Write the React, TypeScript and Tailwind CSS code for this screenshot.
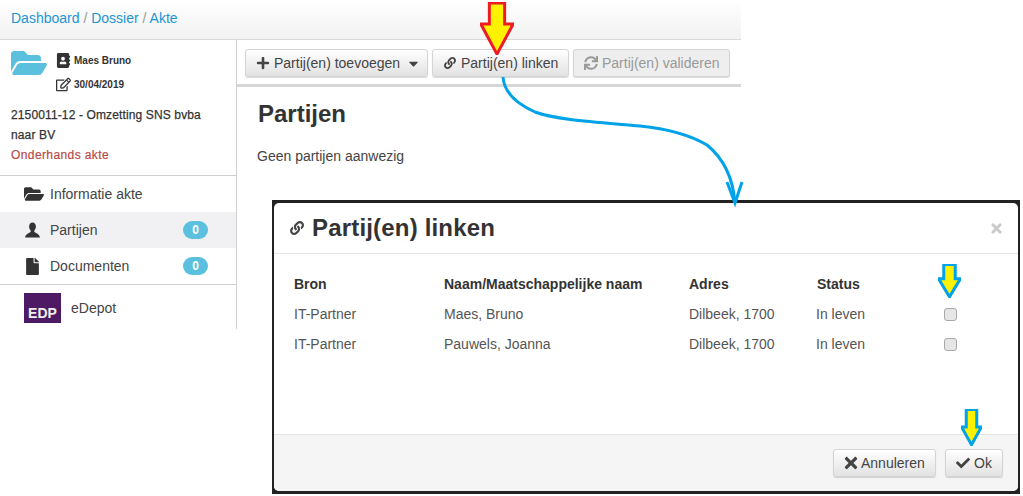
import { FaFolderOpen, FaFile, FaLink, FaPlus, FaTimes, FaCheck, FaSync, FaRegEdit, FaAddressBook, FaCaretDown } from "react-icons/fa";

const F = "font-['Liberation_Sans',Arial,sans-serif]";
const btn = "flex items-center rounded-[3px] border border-[#d4d4d4] bg-gradient-to-b from-[#ffffff] to-[#e2e2e2] shadow-[0_1px_1px_rgba(0,0,0,0.15)] text-[14px] text-[#444]";

function Arrow({ cls, pts, fill, stroke, sw }: { cls: string; pts: string; fill: string; stroke: string; sw: number }) {
  return (
    <svg className={cls} viewBox="0 0 40 60" preserveAspectRatio="none">
      <polygon points={pts} fill={fill} stroke={stroke} strokeWidth={sw} vectorEffect="non-scaling-stroke" />
    </svg>
  );
}

function UserIcon() {
  return (
    <svg width="17" height="17" viewBox="0 0 16 16" fill="currentColor">
      <path d="M8 .5c-2 0-3.2 1.6-3.2 3.8 0 1.5.6 2.8 1.4 3.6.3.4.3 1-.1 1.4C5 10.3 1.5 11 1 14.5h14c-.5-3.5-4-4.2-5.1-5.2-.4-.4-.4-1-.1-1.4.8-.8 1.4-2.1 1.4-3.6C11.2 2.1 10 .5 8 .5z" />
    </svg>
  );
}

function NavItem({ icon, label, badge, active }: { icon: React.ReactNode; label: string; badge?: boolean; active?: boolean }) {
  return (
    <div className={`flex items-center h-[36px] pl-[24px] pr-[28px] text-[14px] text-[#444] ${active ? "bg-[#f1f1f4]" : ""}`}>
      <span className="w-[26px] flex justify-start text-[#333]">{icon}</span>
      <span className="flex-1">{label}</span>
      {badge && <span className="w-[25px] h-[18px] rounded-[9px] bg-[#5bc0de] text-white text-[12px] font-bold flex items-center justify-center">0</span>}
    </div>
  );
}

function Row({ name }: { name: string }) {
  return (
    <div className="flex items-center h-[30px] text-[14px] text-[#555]">
      <span className="w-[150px]">IT-Partner</span>
      <span className="w-[245px]">{name}</span>
      <span className="w-[127px]">Dilbeek, 1700</span>
      <span className="w-[128px]">In leven</span>
      <span className="w-[13px] h-[13px] rounded-[3px] border border-[#a9a9a9] bg-[#e6e6e6]" />
    </div>
  );
}

export default function App() {
  return (
    <div className={`${F} relative w-[1023px] h-[496px] overflow-hidden bg-white`}>
      <div className="w-[741px]">
        <div className="h-[40px] border-b border-[#d8d8d8] bg-gradient-to-b from-[#ffffff] to-[#f2f2f2] pl-[11px] pt-[9px] text-[14px] leading-[18px] text-[#999]">
          <span className="text-[#2196d3]">Dashboard</span> / <span className="text-[#2196d3]">Dossier</span> / <span className="text-[#2196d3]">Akte</span>
        </div>
        <div className="flex">
          <aside className="w-[237px] h-[289px] shrink-0 border-r border-[#d0d0d0]">
            <div className="h-[136px] border-b border-[#cfcfcf] pl-[11px]">
              <div className="flex">
                <FaFolderOpen className="mt-[5px] text-[#5bc0de]" size={36} />
                <div className="ml-[9px] mt-[11px] text-[10px] font-bold text-[#333]">
                  <div className="flex items-center h-[18px] gap-[3px]"><FaAddressBook size={15} className="w-[15px]" />Maes Bruno</div>
                  <div className="flex items-center h-[18px] mt-[6px] gap-[3px]"><FaRegEdit size={15} className="w-[15px]" />30/04/2019</div>
                </div>
              </div>
              <div className="mt-[12px] text-[12px] leading-[20px] tracking-[0.13px] [-webkit-text-stroke:0.25px_#333] text-[#333]">
                2150011-12 - Omzetting SNS bvba<br />naar BV
              </div>
              <div className="text-[12px] leading-[20px] tracking-[0.4px] [-webkit-text-stroke:0.2px_#b94a48] text-[#b94a48]">Onderhands akte</div>
            </div>
            <NavItem icon={<FaFolderOpen size={20} />} label="Informatie akte" />
            <NavItem active icon={<UserIcon />} label="Partijen" badge />
            <NavItem icon={<FaFile size={17} />} label="Documenten" badge />
            <div className="border-t border-[#cfcfcf] flex items-center pl-[24px] pt-[8px]">
              <div className="w-[37px] h-[30px] bg-[#4d1a63] text-[#eee] text-[14px] font-bold flex items-end justify-center leading-[19px]">EDP</div>
              <span className="ml-[10px] text-[14px] text-[#444]">eDepot</span>
            </div>
          </aside>
          <main className="flex-1">
            <div className="h-[47px] pl-[8px] pt-[9px] border-b-[3px] border-[#d6d6d6] flex gap-[4px]">
              <div className={`${btn} w-[183px] h-[28px] pl-[10px]`}>
                <FaPlus size={14} className="mr-[4px]" />Partij(en) toevoegen
                <FaCaretDown size={15} className="ml-[6px]" />
              </div>
              <div className={`${btn} w-[137px] h-[28px] pl-[11px]`}>
                <FaLink size={12} className="mr-[5px]" />Partij(en) linken
              </div>
              <div className={`${btn} w-[157px] h-[28px] pl-[10px] text-[#999] bg-none bg-[#eeeeee]`}>
                <FaSync size={14} className="mr-[4px]" />Partij(en) valideren
              </div>
            </div>
            <h1 className="mt-[12px] ml-[21px] text-[24px] leading-[30px] font-bold text-[#333]">Partijen</h1>
            <p className="mt-[17px] ml-[20px] text-[14px] leading-[20px] text-[#444]">Geen partijen aanwezig</p>
            <div className="mt-[32px] ml-[39px] flex text-[14px] leading-[16px] text-[#555]">
              <span className="w-[79px]">toevoegen</span><span className="w-[48px]">▾</span><span className="w-[142px]">Partij(en) linken</span><span>Partij(en) valideren</span>
            </div>
          </main>
        </div>
      </div>

      {/* Modal */}
      <div className="absolute left-[272px] top-[200px] w-[748px] h-[294px] bg-[#222] pl-[2px] pr-[2px] pt-[3px] pb-[3px]">
        <div className="w-full h-full rounded-[5px] bg-white flex flex-col overflow-hidden">
          <div className="h-[51px] border-b border-[#e5e5e5] flex items-center pl-[16px] pr-[14px] shrink-0">
            <FaLink size={14} className="text-[#444] mr-[8px]" />
            <span className="text-[24px] font-bold tracking-[0.18px] text-[#333] leading-[30px]">Partij(en) linken</span>
            <FaTimes size={15} className="ml-auto text-[#c9c9c9]" />
          </div>
          <div className="flex-1 pl-[20px] pt-[15px]">
            <div className="flex items-center h-[30px] text-[14px] font-bold text-[#333]">
              <span className="w-[150px]">Bron</span>
              <span className="w-[245px]">Naam/Maatschappelijke naam</span>
              <span className="w-[128px]">Adres</span>
              <span>Status</span>
            </div>
            <Row name="Maes, Bruno" />
            <Row name="Pauwels, Joanna" />
          </div>
          <div className="h-[57px] shrink-0 border-t border-[#e5e5e5] bg-[#f5f5f5] flex justify-end gap-[9px] pt-[14px] pr-[15px]">
            <div className={`${btn} w-[103px] h-[28px] pl-[8px]`}><FaTimes size={18} className="mr-[1px]" />Annuleren</div>
            <div className={`${btn} w-[58px] h-[28px] pl-[10px]`}><FaCheck size={14} className="mr-[4px]" />Ok</div>
          </div>
        </div>
      </div>

      {/* Annotations */}
      <Arrow cls="absolute left-[480px] top-[2px] w-[34px] h-[53px]" pts="11,1 29,1 29,25 39,25 20,59 1,25 11,25" fill="#fff200" stroke="#ed1c24" sw={3} />
      <Arrow cls="absolute left-[938px] top-[264px] w-[23px] h-[34px]" pts="10,1 30,1 30,26 39,26 20,58 1,26 10,26" fill="#fff200" stroke="#00a2e8" sw={3} />
      <Arrow cls="absolute left-[961px] top-[409px] w-[21px] h-[37px]" pts="10,1 30,1 30,29 39,29 20,58 1,29 10,29" fill="#fff200" stroke="#00a2e8" sw={3} />
      <svg className="absolute left-[495px] top-[70px] w-[250px] h-[140px]" viewBox="0 0 250 140" fill="none" stroke="#00a2e8" strokeWidth="3">
        <path d="M8 7C9 22 20 33 40 42C62 50 100 52 145 56C175 59 195 65 212 75C228 88 238 108 240 133" />
        <path d="M232 112L240 133L247 112" />
      </svg>
    </div>
  );
}
